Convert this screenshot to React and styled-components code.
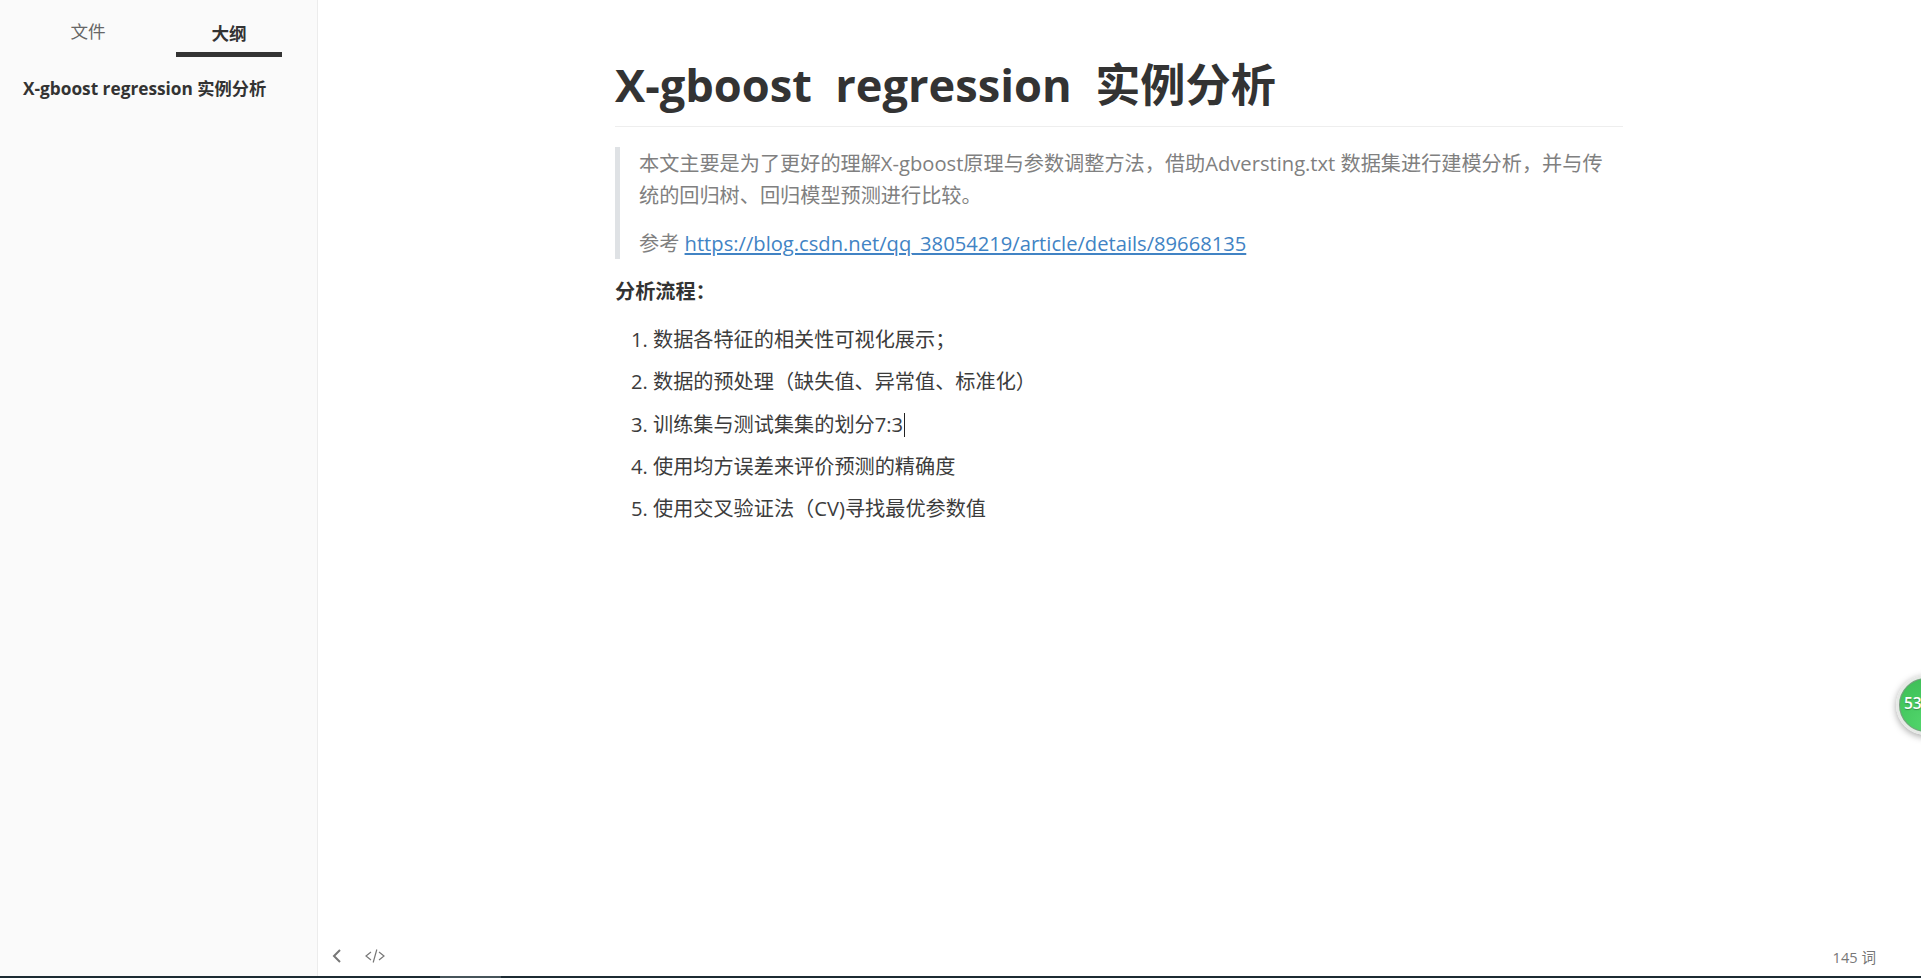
import React from "react";
import styled, { createGlobalStyle } from "styled-components";

const Global = createGlobalStyle`
  html, body { margin: 0; padding: 0; height: 100%; overflow: hidden; background: #fff; }
  #root { height: 100%; }
  * { box-sizing: border-box; }
`;

const FONT = `"Open Sans", "Noto Sans CJK SC", sans-serif`;

const Page = styled.div`
  position: relative;
  height: 978px;
  display: flex;
  flex-direction: column;
  overflow: hidden;
  font-family: ${FONT};
  color: #333;
`;
const Body = styled.div`
  flex: 1;
  display: flex;
  min-height: 0;
`;
const Sidebar = styled.aside`
  width: 318px;
  flex: none;
  background: #fafafa;
  border-right: 1px solid #ececec;
`;
const Tabs = styled.div`
  display: flex;
  padding: 16px 0 0 35px;
  gap: 35px;
`;
const Tab = styled.div`
  width: 106px;
  height: 41px;
  padding-top: ${(p) => (p.$active ? 2 : 0)}px;
  text-align: center;
  font-size: 17.6px;
  line-height: 30px;
  font-weight: ${(p) => (p.$active ? 700 : 400)};
  color: ${(p) => (p.$active ? "#333" : "#666")};
  border-bottom: 5px solid ${(p) => (p.$active ? "#333" : "transparent")};
`;
const OutlineItem = styled.div`
  margin: 17px 0 0 23px;
  font-size: 17.25px;
  line-height: 30px;
  font-weight: 700;
  color: #333;
`;
const Main = styled.main`
  flex: 1;
  min-width: 0;
  display: flex;
  flex-direction: column;
`;
const Editor = styled.div`
  flex: 1;
  padding: 54px 298px 0 297px;
  font-size: 20.16px;
  line-height: 32.256px;
  color: #3c3c3c;
`;
const Title = styled.h1`
  margin: 0 0 20px;
  padding-bottom: 11px;
  font-size: 45.2px;
  line-height: 61px;
  font-weight: 700;
  color: #333;
  white-space: pre-wrap;
  border-bottom: 1px solid #eee;
`;
const Quote = styled.blockquote`
  margin: 0 0 16px;
  padding: 0 15px 0 19px;
  border-left: 5px solid #dfe2e5;
  color: #808080;
`;
const QuotePara = styled.p`
  margin: ${(p) => (p.$last ? "15px 0 0" : "0")};
`;
const Link = styled.a`
  color: #4183c4;
  text-decoration: underline;
`;
const Strong = styled.p`
  margin: 0 0 16px;
  font-weight: 700;
  color: #333;
`;
const Steps = styled.ol`
  margin: 0;
  padding: 0 0 0 38px;
`;
const Step = styled.li`
  margin: 0 0 10px;
  padding: 0;
`;
const Caret = styled.span`
  display: inline-block;
  width: 1px;
  height: 24px;
  margin-left: 1px;
  background: #222;
  vertical-align: -5px;
`;
const Footer = styled.footer`
  height: 42px;
  flex: none;
  display: flex;
  align-items: center;
  padding: 2px 45px 0 12px;
  color: #777;
`;
const FooterIcon = styled.svg`
  width: ${(p) => p.$w}px;
  height: 18px;
  margin-right: 21px;
  fill: none;
  stroke: currentColor;
`;
const WordCount = styled.span`
  margin-left: auto;
  font-size: 14.6px;
  color: #777;
`;
const Taskbar = styled.div`
  height: 2px;
  flex: none;
  background: #1c2b33;
  display: flex;
`;
const TaskbarItem = styled.div`
  width: 61px;
  margin-left: 440px;
  background: #46545a;
`;
const Badge = styled.div`
  position: absolute;
  left: 1896px;
  top: 675px;
  width: 60px;
  height: 60px;
  border-radius: 50%;
  background: radial-gradient(circle at 50% 85%, #52d66c 0%, #45c85f 55%, #3dbb55 100%);
  border: 3px solid #e6e8e6;
  box-shadow: 0 2px 7px rgba(0, 0, 0, 0.35), inset 0 0 0 1px #7f9884;
  color: #fff;
  font-size: 15.5px;
  font-weight: 600;
  line-height: 50px;
  padding-left: 5px;
  text-shadow: 0 1px 1px rgba(0, 0, 0, 0.3);
`;

export default function App() {
  return (
    <Page>
      <Global />
      <Body>
        <Sidebar>
          <Tabs>
            <Tab>文件</Tab>
            <Tab $active>大纲</Tab>
          </Tabs>
          <OutlineItem>X-gboost regression 实例分析</OutlineItem>
        </Sidebar>
        <Main>
          <Editor>
            <Title>{"X-gboost  regression  实例分析"}</Title>
            <Quote>
              <QuotePara>本文主要是为了更好的理解X-gboost原理与参数调整方法，借助Adversting.txt 数据集进行建模分析，并与传统的回归树、回归模型预测进行比较。</QuotePara>
              <QuotePara $last>
                参考 <Link href="#">https://blog.csdn.net/qq_38054219/article/details/89668135</Link>
              </QuotePara>
            </Quote>
            <Strong>分析流程：</Strong>
            <Steps>
              <Step>数据各特征的相关性可视化展示；</Step>
              <Step>数据的预处理（缺失值、异常值、标准化）</Step>
              <Step>训练集与测试集集的划分7:3<Caret /></Step>
              <Step>使用均方误差来评价预测的精确度</Step>
              <Step>使用交叉验证法（CV)寻找最优参数值</Step>
            </Steps>
          </Editor>
          <Footer>
            <FooterIcon $w={14} viewBox="0 0 14 18" strokeWidth="2">
              <path d="M10 3 L4 9 L10 15" />
            </FooterIcon>
            <FooterIcon $w={20} viewBox="0 0 20 18" strokeWidth="1.2">
              <path d="M6 5 L1 9 L6 13 M14 5 L19 9 L14 13 M11.8 2.5 L8.2 15.5" />
            </FooterIcon>
            <WordCount>145 词</WordCount>
          </Footer>
        </Main>
      </Body>
      <Taskbar>
        <TaskbarItem />
      </Taskbar>
      <Badge>53</Badge>
    </Page>
  );
}
